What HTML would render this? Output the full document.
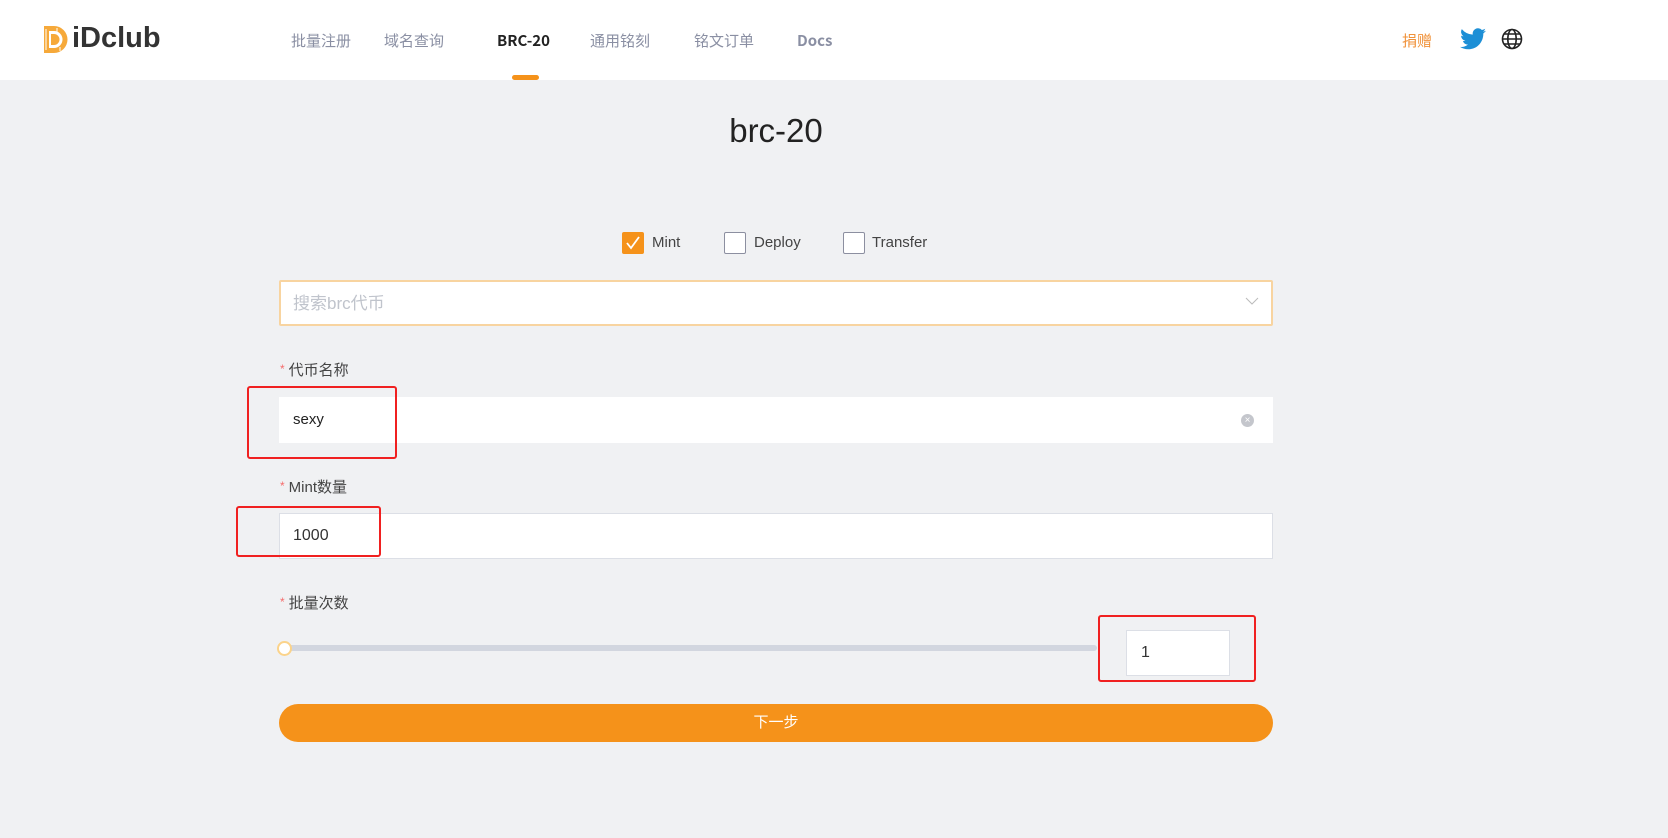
<!DOCTYPE html>
<html><head><meta charset="utf-8"><style>
*{box-sizing:border-box;margin:0;padding:0}
body{width:1668px;height:838px;overflow:hidden;background:#f0f1f3;font-family:"Liberation Sans","Noto Sans CJK SC",sans-serif;position:relative;color:#333}
.hdr{position:absolute;left:0;top:0;width:1668px;height:80px;background:#fff}
.a{position:absolute}
.nav{position:absolute;top:30px;height:22px;line-height:22px;font-size:15px;color:#8a8fa3;font-family:"Noto Sans CJK SC",sans-serif}
.lbl{position:absolute;left:280px;font-size:15px;color:#444}
.lbl b{color:#f56c6c;font-weight:normal;font-size:12px;margin-right:4px;vertical-align:2px}
.cb{position:absolute;top:232px;width:22px;height:22px;border:1px solid #8c8fa0;background:#fff;border-radius:2px}
.ct{position:absolute;top:234px;font-size:15px;color:#444}
.red{position:absolute;border:2px solid #f02020;border-radius:3px}
</style></head><body>
<div class="hdr"></div>
<svg class="a" style="left:42px;top:25px" width="26" height="29" viewBox="0 0 26 29"><path d="M2 1h10a12 12 0 0 1 0 27H2z" fill="#f6a93a"/><path d="M7 6h5a8 8 0 0 1 0 17H7z" fill="#fff"/><path d="M9 9h3a5.5 5.5 0 0 1 0 11H9z" fill="#f6a93a"/><path d="M4 4v21M15 3v4M18 22v4" stroke="#fff" stroke-width="1"/></svg>
<div class="a" style="left:72px;top:22px;font-size:29px;font-weight:bold;color:#333">iDclub</div>
<div class="nav" style="left:291px">批量注册</div>
<div class="nav" style="left:384px">域名查询</div>
<div class="nav" style="left:497px;color:#222;font-weight:bold">BRC-20</div>
<div class="nav" style="left:590px">通用铭刻</div>
<div class="nav" style="left:694px">铭文订单</div>
<div class="nav" style="left:797px;font-weight:bold">Docs</div>
<div class="a" style="left:512px;top:75px;width:27px;height:5px;background:#f5921a;border-radius:3px"></div>
<div class="nav" style="left:1402px;color:#f0923a">捐赠</div>
<svg class="a" style="left:1460px;top:28px" width="26" height="22" viewBox="0 0 24 20"><path d="M24 2.4a10 10 0 0 1-2.8.8A5 5 0 0 0 23.3.5a10 10 0 0 1-3.1 1.2A4.9 4.9 0 0 0 11.8 6 14 14 0 0 1 1.7.9a4.9 4.9 0 0 0 1.5 6.6A4.9 4.9 0 0 1 1 6.9a4.9 4.9 0 0 0 3.9 4.8 5 5 0 0 1-2.2.1 4.9 4.9 0 0 0 4.6 3.4A9.9 9.9 0 0 1 0 17.3 14 14 0 0 0 7.5 19.5c9.1 0 14-7.5 14-14v-.6A10 10 0 0 0 24 2.4z" fill="#1d8fd6"/></svg>
<svg class="a" style="left:1501px;top:28px" width="22" height="22" viewBox="0 0 22 22" fill="none" stroke="#222" stroke-width="1.6"><circle cx="11" cy="11" r="9.5"/><ellipse cx="11" cy="11" rx="4.2" ry="9.5"/><path d="M1.5 11h19M3 6h16M3 16h16"/></svg>
<div class="a" style="left:0;width:1552px;top:112px;text-align:center;font-size:33px;color:#222">brc-20</div>
<div class="cb" style="left:622px;background:#f5921a;border-color:#f5921a"><svg width="20" height="20" viewBox="0 0 20 20"><path d="M4 10l4 5 8-11" stroke="#fff" stroke-width="1.8" fill="none"/></svg></div>
<div class="ct" style="left:652px">Mint</div>
<div class="cb" style="left:724px"></div><div class="ct" style="left:754px">Deploy</div>
<div class="cb" style="left:843px"></div><div class="ct" style="left:872px">Transfer</div>
<div class="a" style="left:279px;top:280px;width:994px;height:46px;background:#fff;border:2px solid #f8d4a0;border-radius:2px"></div>
<div class="a" style="left:293px;top:289px;font-size:17px;color:#c0c4cc">搜索brc代币</div>
<svg class="a" style="left:1245px;top:296px" width="14" height="10"><path d="M1 2l6 6 6-6" stroke="#bbb" fill="none"/></svg>
<div class="lbl" style="top:359px"><b>*</b>代币名称</div>
<div class="a" style="left:279px;top:397px;width:994px;height:46px;background:#fff"></div>
<div class="a" style="left:293px;top:411px;font-size:15px;color:#222">sexy</div>
<div class="a" style="left:1241px;top:414px;width:13px;height:13px;border-radius:50%;background:#c4c6cc;color:#fff;font-size:10px;line-height:13px;text-align:center">×</div>
<div class="red" style="left:247px;top:386px;width:150px;height:73px"></div>
<div class="lbl" style="top:476px"><b>*</b>Mint数量</div>
<div class="a" style="left:279px;top:513px;width:994px;height:46px;background:#fff;border:1px solid #dcdfe6"></div>
<div class="a" style="left:293px;top:527px;font-size:16px;color:#333">1000</div>
<div class="red" style="left:236px;top:506px;width:145px;height:51px"></div>
<div class="lbl" style="top:592px"><b>*</b>批量次数</div>
<div class="a" style="left:285px;top:645px;width:812px;height:6px;background:#d2d6df;border-radius:3px"></div>
<div class="a" style="left:277px;top:641px;width:15px;height:15px;border-radius:50%;background:#fff;border:2px solid #fbd38a"></div>
<div class="a" style="left:1126px;top:630px;width:104px;height:46px;background:#fff;border:1px solid #dcdfe6"></div>
<div class="a" style="left:1141px;top:644px;font-size:16px;color:#333">1</div>
<div class="red" style="left:1098px;top:615px;width:158px;height:67px"></div>
<div class="a" style="left:279px;top:704px;width:994px;height:38px;background:#f5921a;border-radius:19px;color:#fff;font-size:15px;text-align:center;line-height:38px">下一步</div>
</body></html>
